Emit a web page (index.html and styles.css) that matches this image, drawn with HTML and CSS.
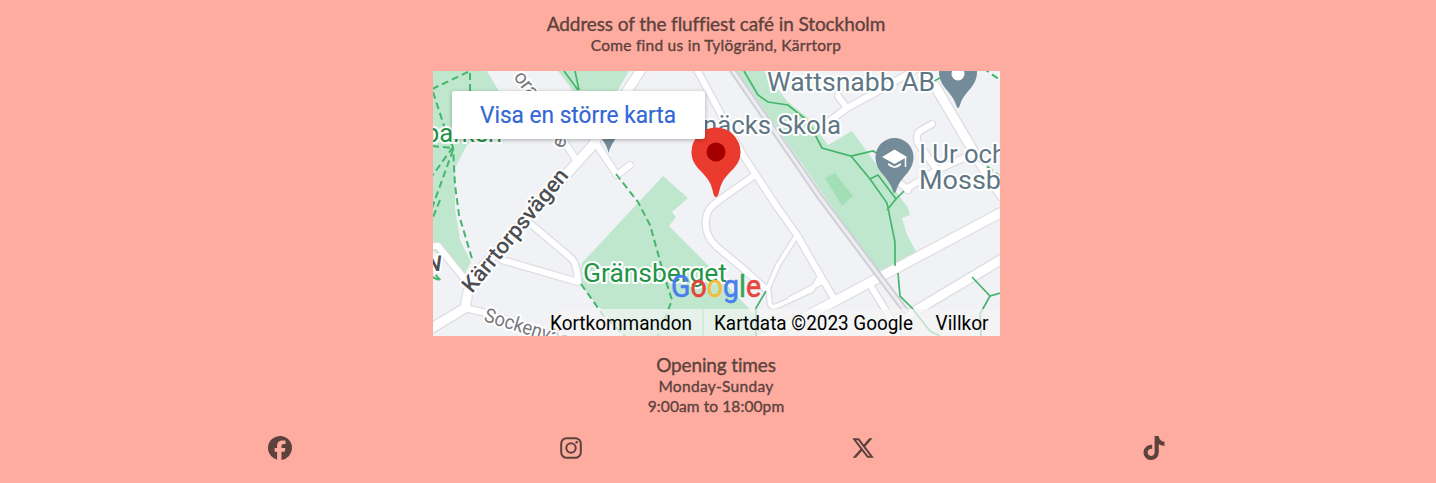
FILE: index.html
```html
<!DOCTYPE html>
<html lang="en">
<head>
<meta charset="utf-8">
<title>Café in Stockholm</title>
<link rel="stylesheet" href="styles.css">
</head>
<body>
<footer class="footer">
  <section class="address">
    <h2 class="title title-address">Address of the fluffiest café in Stockholm</h2>
    <p class="line line-address">Come find us in Tylögränd, Kärrtorp</p>
  </section>
  <svg class="map" viewBox="433 71 567 265" role="img" aria-label="Map">
    <defs>
      <filter id="shadow" x="-10%" y="-20%" width="120%" height="150%"><feDropShadow dx="0" dy="1" stdDeviation="2" flood-opacity=".3"/></filter>
      <g id="roads">
        <path d="M642 68L592 146L478 272L468 292L465 308L430 329"/>
        <path d="M935 86L985 171L1002 196"/>
        <path d="M760 340L818 310L1002 212"/>
        <path d="M890 324L915 311L1002 259"/>
        <path class="mid" d="M696 68L743 155L775 204L797 235L820 275L836 302"/>
        <path class="mid" d="M752 177L718 201Q706 209 706 220Q704 235 717 247L740 266L767 290"/>
        <path class="mid" d="M465 308L482 312L545 332M532 225L572 259Q577 264 578 282L502 260"/>
        <path class="mid" d="M430 246H438L463 277M597 145L617 175L630 165M561 137L575 158"/>
        <path class="mid" d="M872 288L888 314L899 338M820 128L847 108L880 90L918 68M838 96L847 108"/>
        <path class="mid" d="M932 124L920 131Q915 135 918 143L937 170M906 189L937 170L975 153M900 183L908 190"/>
        <path class="thin" d="M797 235L778 265L768 288L770 304Q771 308 777 306L812 290L820 276M820 283L790 299"/>
      </g>
    </defs>
    <rect class="land" x="432" y="71" width="568" height="265"/>
    <g class="park">
      <path d="M432 71H487L510 110L467 145L455 168V208L460 240L471 262L463 277L432 249Z"/>
      <path d="M558 71H629L612 100H580Z"/>
      <path d="M663 176L688 198L672 212L676 217L669 226L704 261L775 336H623L580 284L582 263Z"/>
      <path d="M737 71H764L787 101L808 118L828 145L852 131L908 208L910 215L902 218L907 235L917 253L880 277L805 168Z"/>
      <path class="field" d="M825 178L835 173L853 196L842 206Z"/>
    </g>
    <use href="#roads" class="road-edge"/>
    <use href="#roads" class="road"/>
    <path class="rail" d="M731 68L820 197L907 313"/>
    <path class="rail-gap" d="M731 68L820 197L907 313"/>
    <g class="trail">
      <path d="M744 71L758 95L768 102L788 105L808 121L822 148L851 156L873 151L880 155M851 156L870 179L887 203L895 242V266M870 179L878 175L896 199L887 210M896 199L904 191M898 273L900 296L912 308L930 331L940 336M972 277L990 296L1000 293M990 296L980 314L981 336M766 291L756 308V336M930 83L942 77M564 71L578 90M575 71L579 90"/>
    </g>
    <g class="trail dashed">
      <path d="M432 89L470 71V95M433 92L446 132L453 147L455 185L459 215L473 262M453 147L432 176M453 150L432 208M432 146L453 148M440 200L432 220M616 174L638 202L650 225L664 275L672 300L658 336M581 284L603 315L625 336M983 68L1000 80M978 160L1000 176"/>
      <path d="M432 277L441 281L434 273"/>
    </g>
    <g class="label grey">
      <text x="767" y="91" textLength="168" lengthAdjust="spacingAndGlyphs">Wattsnabb AB</text>
      <text x="703" y="134" textLength="138" lengthAdjust="spacingAndGlyphs">näcks Skola</text>
      <text x="919" y="163" textLength="87" lengthAdjust="spacingAndGlyphs">I Ur och</text>
      <text x="919" y="189" textLength="82" lengthAdjust="spacingAndGlyphs">Mossb</text>
    </g>
    <g class="label green">
      <text x="425" y="142" textLength="77" lengthAdjust="spacingAndGlyphs">parken</text>
      <text x="583" y="282" textLength="144" lengthAdjust="spacingAndGlyphs">Gränsberget</text>
    </g>
    <text class="label street" transform="translate(472 294) rotate(-50.5)" textLength="153" lengthAdjust="spacingAndGlyphs">Kärrtorpsvägen</text>
    <text class="label minor" transform="translate(483 321) rotate(17)" textLength="108" lengthAdjust="spacingAndGlyphs">Sockenvägen</text>
    <text class="label minor" transform="translate(513 77) rotate(53)">ora</text>
    <text class="label minor" transform="translate(564 149) rotate(-75)">e</text>
    <text class="label street" transform="translate(425 271) skewX(-8)">N</text>
    <g class="poi">
      <path d="M894.500 193C893.500 193 893 191 891.500 187C887 176 875.500 171 875.500 157A19 19 0 0 1 913.500 157C913.500 171 902 176 897.500 187C896 191 895.500 193 894.500 193Z"/>
      <path d="M958 108C957 108 956.500 106 955 102C950.500 91 939 86 939 72A19 19 0 0 1 977 72C977 86 965.500 91 961 102C959.500 106 959 108 958 108Z"/>
      <path d="M608.500 153C607 143 599 137 597 130H620C618 137 611 143 608.500 153Z"/>
      <circle class="white" cx="958" cy="74" r="6.500"/>
      <path class="white" d="M882 157L894.500 149.500L907 157L894.500 164ZM888 163L894.500 166.500L901 163V165Q895 171 888 165Z"/>
      <path d="M905.500 157V167" stroke="#fff" stroke-width="1.500"/>
    </g>
    <path class="pin" d="M716 197C713 197 713.500 190 710 183C704 171 691.500 167 691.500 152A24.500 24.500 0 0 1 740.500 152C740.500 167 728 171 722 183C718.500 190 719 197 716 197Z"/>
    <circle class="pin-dot" cx="716" cy="152" r="9.500"/>
    <g class="map-card">
      <rect x="452" y="91" width="253" height="48" rx="3" filter="url(#shadow)"/>
      <text x="480" y="122.500" textLength="196" lengthAdjust="spacingAndGlyphs">Visa en större karta</text>
    </g>
    <path class="credit-bar" d="M555 309H702.500V336H555ZM703.500 309H1000V336H703.500Z"/>
    <g class="wordmark">
      <text x="671" y="296.500" textLength="90" lengthAdjust="spacingAndGlyphs"><tspan class="g-blue">G</tspan><tspan class="g-red">o</tspan><tspan class="g-yellow">o</tspan><tspan class="g-blue">g</tspan><tspan class="g-green">l</tspan><tspan class="g-red">e</tspan></text>
    </g>
    <g class="credits">
      <text x="550" y="330" textLength="142" lengthAdjust="spacingAndGlyphs">Kortkommandon</text>
      <text x="714" y="330" textLength="199" lengthAdjust="spacingAndGlyphs">Kartdata ©2023 Google</text>
      <text x="935.500" y="330" textLength="53" lengthAdjust="spacingAndGlyphs">Villkor</text>
    </g>
  </svg>
  <section class="hours">
    <h2 class="title title-hours">Opening times</h2>
    <p class="line line-days">Monday-Sunday</p>
    <p class="line line-time">9:00am to 18:00pm</p>
  </section>
  <nav class="social">
    <a class="social-link" aria-label="Facebook"><svg class="icon" viewBox="0 0 24 24"><path d="M24 12a12 12 0 1 0-14.900 11.650v-7.980H6.630V12H9.100v-1.580c0-4.090 1.850-5.980 5.860-5.980.76 0 2.070.15 2.610.3v3.320c-.28-.03-.77-.04-1.390-.04-1.970 0-2.730.74-2.730 2.680V12h3.920l-.67 3.670h-3.250v8.240A12 12 0 0 0 24 12z"/></svg></a>
    <a class="social-link" aria-label="Instagram"><svg class="icon outline" viewBox="0 0 24 24"><rect x="2.200" y="2.200" width="19.600" height="19.600" rx="5.500"/><circle cx="12" cy="12" r="4.700"/><circle class="dot" cx="17.700" cy="6.300" r="1.300"/></svg></a>
    <a class="social-link" aria-label="X"><svg class="icon" viewBox="0 0 512 512"><path d="M389.200 48h70.600L305.600 224.200 487 464H345L233.700 318.600 106.500 464H35.800L200.700 275.500 26.800 48h145.600l100.500 132.900zm-24.800 373.800h39.100L151.100 88h-42z"/></svg></a>
    <a class="social-link" aria-label="TikTok"><svg class="icon" viewBox="0 0 448 512"><path d="M448 209.900a210.100 210.100 0 0 1-122.800-39.300v178.800A162.600 162.600 0 1 1 185 188.300v89.900a74.600 74.600 0 1 0 52.200 71.200V0h88a121.200 121.200 0 0 0 1.900 22.200 122.200 122.200 0 0 0 53.900 80.200 121.400 121.400 0 0 0 67 20.100z"/></svg></a>
  </nav>
</footer>
</body>
</html>
```
FILE: styles.css
```css
* { box-sizing: border-box; margin: 0; }
body { background: #ffaca0; color: #5c423d; font-family: Lato, sans-serif; }
.footer { height: 483px; padding: 12px 4px 0 0; display: flex; flex-direction: column; align-items: center; overflow: hidden; }
.address, .hours { text-align: center; display: flex; flex-direction: column; align-items: center; }
.title { font-size: 19px; line-height: 23px; font-weight: 400; -webkit-text-stroke: .35px; white-space: nowrap; font-variant-ligatures: none; }
.title-address { letter-spacing: -.1px; }
.title-hours { letter-spacing: -.15px; }
.line { font-size: 15.500px; line-height: 20px; -webkit-text-stroke: .35px; white-space: nowrap; font-variant-ligatures: none; }
.line-address { letter-spacing: .25px; }
.line-days { letter-spacing: .3px; }
.line-time { letter-spacing: .1px; }
.map { display: block; width: 567px; height: 265px; margin-top: 16px; flex: none; }
.hours { margin-top: 17px; }
.social { width: 1166px; margin: 20px 0 0 2px; display: grid; grid-template-columns: repeat(4, 1fr); justify-items: center; }
.social-link { display: flex; }
.icon { width: 24px; height: 24px; fill: #5c423d; }
.outline { fill: none; stroke: #5c423d; stroke-width: 2; }
.dot { fill: #5c423d; stroke: none; }

.land { fill: #f1f2f5; }
.park { fill: #bfe7ce; }
.field { fill: #a2dfb7; }
.road, .road-edge { fill: none; stroke-linejoin: round; stroke-linecap: round; }
.road { stroke: #fff; stroke-width: 9px; }
.road-edge { stroke: #dddde2; stroke-width: 11.500px; }
.road { --mid: 6px; --thin: 4px; }
.road-edge { --mid: 8.500px; --thin: 6.500px; }
.mid { stroke-width: var(--mid); }
.thin { stroke-width: var(--thin); }
.rail { fill: none; stroke: #cfcfd6; stroke-width: 7px; }
.rail-gap { fill: none; stroke: #ededf1; stroke-width: 3px; }
.trail { fill: none; stroke: #46b56c; stroke-width: 1.7px; }
.dashed { stroke-dasharray: 7 4; stroke-width: 2px; }
.label { font-family: Roboto, sans-serif; paint-order: stroke; stroke: #fff; stroke-width: 4px; stroke-linejoin: round; }
.grey { font-size: 26px; fill: #5f7685; }
.green { font-size: 25px; fill: #239447; }
.street { font-size: 22px; font-weight: 500; fill: #4d4e53; }
.minor { font-size: 20px; fill: #77777c; }
.poi { fill: #748c99; }
.white { fill: #fff; }
.pin { fill: #ea3b2e; }
.pin-dot { fill: #a50000; }
.map-card { font-family: Roboto, sans-serif; font-size: 23px; fill: #fff; }
.map-card text { fill: #3367d6; stroke: #3367d6; stroke-width: .2px; }
.credit-bar { fill: #f5f5f5; fill-opacity: .7; }
.credits { font-family: Roboto, sans-serif; font-size: 19.500px; fill: #000; }
.wordmark { font-family: Roboto, sans-serif; font-size: 31px; font-weight: 400; stroke-width: .6px; }
.g-blue { fill: #4a7fec; stroke: #4a7fec; }
.g-red { fill: #e6453b; stroke: #e6453b; }
.g-yellow { fill: #f2bd3f; stroke: #f2bd3f; }
.g-green { fill: #38a457; stroke: #38a457; }
```
